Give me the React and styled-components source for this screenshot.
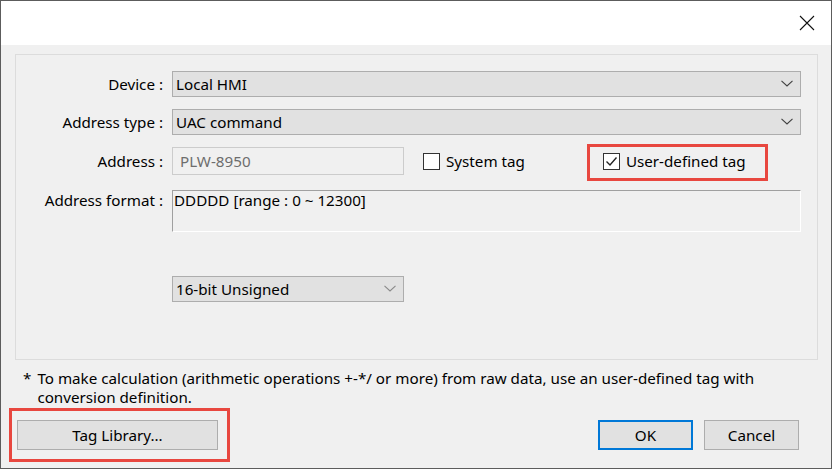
import styled, { createGlobalStyle } from "styled-components";

const Global = createGlobalStyle`
    html, body {
        margin: 0;
        padding: 0;
        background: #f0f0f0;
    }
    * {
        box-sizing: border-box;
    }
`

function Chevron({ light }) {
    return (
        <svg width="12" height="7" viewBox="0 0 12 7">
            <path d="M0.5 0.8 L6 6 L11.5 0.8" fill="none" stroke={light ? "#8a8a8a" : "#404040"} strokeWidth="1.1" />
        </svg>
    )
}

function Select({ value, width, height, light }) {
    return (
        <SelectBox width={width} height={height}>
            <span>{value}</span>
            <Chevron light={light} />
        </SelectBox>
    )
}

function Check({ checked, label }) {
    return (
        <CheckLabel>
            <Box>
                {checked && (
                    <svg width="15" height="15" viewBox="0 0 15 15">
                        <path d="M2.5 7.5 L6 11 L12.5 3.5" fill="none" stroke="#222" strokeWidth="1.4" />
                    </svg>
                )}
            </Box>
            {label}
        </CheckLabel>
    )
}

export default function App() {
    return (
        <>
            <Global />
            <Window>
                <TitleBar>
                    <Close>
                        <svg width="16" height="16" viewBox="0 0 16 16">
                            <path d="M1 1 L15 15 M15 1 L1 15" stroke="#111" strokeWidth="1.1" />
                        </svg>
                    </Close>
                </TitleBar>
                <Body>
                    <Group>
                        <Row height={26}>
                            <Label>Device :</Label>
                            <Select value="Local HMI" />
                        </Row>
                        <Row height={26} top={12}>
                            <Label>Address type :</Label>
                            <Select value="UAC command" />
                        </Row>
                        <Row height={28} top={12}>
                            <Label>Address :</Label>
                            <Inline>
                                <AddressInput>PLW-8950</AddressInput>
                                <Check label="System tag" />
                                <Highlight>
                                    <Check checked label="User-defined tag" />
                                </Highlight>
                            </Inline>
                        </Row>
                        <Row height={42} top={15}>
                            <Label>Address format :</Label>
                            <FormatBox>DDDDD [range : 0 ~ 12300]</FormatBox>
                        </Row>
                        <Row height={25} top={44}>
                            <span />
                            <Select value="16-bit Unsigned" width={232} light />
                        </Row>
                    </Group>
                    <Note>
                        <Star>*</Star>
                        <span>To make calculation (arithmetic operations +-*/ or more) from raw data, use an user-defined tag with conversion definition.</span>
                    </Note>
                    <Footer>
                        <LibraryMark>
                            <Button width={201}>Tag Library...</Button>
                        </LibraryMark>
                        <Actions>
                            <Button width={95} primary>OK</Button>
                            <Button width={95}>Cancel</Button>
                        </Actions>
                    </Footer>
                </Body>
            </Window>
        </>
    )
}

const Window = styled.div`
    width: 832px;
    height: 469px;
    border: 1px solid #5c5c5c;
    background: #f0f0f0;
    font-family: "Noto Sans", "Open Sans", sans-serif;
    font-size: 15.2px;
    color: #000;
    display: flex;
    flex-direction: column;
`
const TitleBar = styled.div`
    height: 44px;
    background: #fff;
    display: flex;
    justify-content: flex-end;
    align-items: center;
    padding-right: 16px;
`
const Close = styled.div`
    width: 16px;
    height: 16px;
    display: flex;
`
const Body = styled.div`
    flex: 1;
    padding: 9px 13px 0 14px;
    display: flex;
    flex-direction: column;
`
const Group = styled.div`
    height: 306px;
    border: 1px solid #dcdcdc;
    padding: 16px 16px 0 0;
    display: flex;
    flex-direction: column;
`
const Row = styled.div`
    display: grid;
    grid-template-columns: 147px 1fr;
    column-gap: 9px;
    height: ${p => p.height}px;
    margin-top: ${p => p.top || 0}px;
    align-items: ${p => p.height > 30 ? "start" : "center"};
`
const Label = styled.div`
    text-align: right;
    white-space: nowrap;
`
const SelectBox = styled.div`
    width: ${p => p.width ? `${p.width}px` : "100%"};
    height: ${p => p.height || 26}px;
    background: #e1e1e1;
    border: 1px solid #adadad;
    display: flex;
    align-items: center;
    justify-content: space-between;
    padding: 0 7px 0 3px;

    && svg {
        margin-bottom: 1px;
    }
`
const Inline = styled.div`
    display: flex;
    align-items: center;
    height: 100%;
`
const AddressInput = styled.div`
    width: 232px;
    height: 28px;
    border: 1px solid #cccccc;
    background: #f0f0f0;
    color: #6d6d6d;
    display: flex;
    align-items: center;
    padding-left: 7px;
    margin-right: 19px;
`
const CheckLabel = styled.label`
    display: flex;
    align-items: center;
    gap: 6px;
    white-space: nowrap;
`
const Box = styled.span`
    width: 17px;
    height: 17px;
    border: 1px solid #333;
    background: #fff;
    display: flex;
    align-items: center;
    justify-content: center;
`
const Highlight = styled.div`
    margin: -3px 0 -6px 62px;
    height: 37px;
    width: 181px;
    border: 3px solid #e8473f;
    padding-left: 13px;
    display: flex;
    align-items: center;
    padding-bottom: 3px;
`
const FormatBox = styled.div`
    height: 42px;
    border-top: 1px solid #a0a0a0;
    border-left: 1px solid #a0a0a0;
    border-right: 1px solid #fff;
    border-bottom: 1px solid #fff;
    padding: 0 0 0 1px;
    line-height: 19px;
`
const Note = styled.div`
    display: flex;
    gap: 6px;
    padding: 9px 30px 0 8px;
    line-height: 19px;
`
const Star = styled.span`
    flex: none;
`
const Footer = styled.div`
    display: flex;
    justify-content: space-between;
    align-items: center;
    margin-top: 1px;
`
const LibraryMark = styled.div`
    margin-left: -6px;
    border: 3px solid #e8473f;
    padding: 9px 9px 9px 5px;
`
const Actions = styled.div`
    display: flex;
    gap: 11px;
    margin-right: 19px;
`
const Button = styled.div`
    width: ${p => p.width}px;
    height: 30px;
    background: #e1e1e1;
    border: ${p => p.primary ? "2px solid #0078d7" : "1px solid #adadad"};
    display: flex;
    align-items: center;
    justify-content: center;
`
